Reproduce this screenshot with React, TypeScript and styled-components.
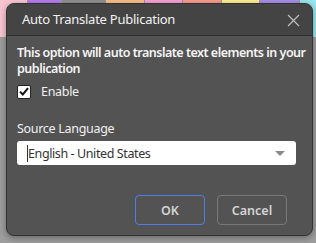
import { createGlobalStyle } from "styled-components";
import styled from "styled-components";

const GlobalStyle = createGlobalStyle`
  html, body {
    margin: 0;
    padding: 0;
    background: #9d9d9d;
    overflow: hidden;
  }
  * {
    box-sizing: border-box;
  }
`;

const tiles = [
  { color: "#f9c4d2", width: 27 },
  { color: "#b57bf0", width: 33 },
  { color: "#8f8f8f", width: 43 },
  { color: "#fbbd86", width: 38 },
  { color: "#f79fd3", width: 37 },
  { color: "#fa9a8e", width: 38 },
  { color: "#fdf08f", width: 37 },
  { color: "#a68ee8", width: 39 },
  { color: "#99e4ee", width: 24 },
];

export default function App() {
  return (
    <Page>
      <GlobalStyle />
      <TileRow>
        {tiles.map((t, i) => (
          <Tile key={i} $color={t.color} $width={t.width} />
        ))}
      </TileRow>
      <Dialog>
        <Header>
          <Title>Auto Translate Publication</Title>
          <CloseButton aria-label="Close">
            <svg width="13" height="13" viewBox="0 0 13 13">
              <path
                d="M1 1 L12 12 M12 1 L1 12"
                stroke="#bdbdbd"
                strokeWidth="1.2"
                fill="none"
              />
            </svg>
          </CloseButton>
        </Header>
        <Body>
          <Description>
            This option will auto translate text elements in your publication
          </Description>
          <CheckRow>
            <CheckBox>
              <svg width="10" height="9" viewBox="0 0 10 9">
                <path
                  d="M1 4.6 L3.8 7.4 L9 1.2"
                  stroke="#111"
                  strokeWidth="2"
                  fill="none"
                />
              </svg>
            </CheckBox>
            <CheckLabel>Enable</CheckLabel>
          </CheckRow>
          <FieldLabel>Source Language</FieldLabel>
          <Select>
            <SelectText>English - United States</SelectText>
            <Caret />
          </Select>
        </Body>
        <Footer>
          <Button $primary>OK</Button>
          <Button>Cancel</Button>
        </Footer>
      </Dialog>
    </Page>
  );
}

const Page = styled.div`
  position: relative;
  width: 316px;
  height: 243px;
  font-family: "Noto Sans", "Open Sans", sans-serif;
`;

const TileRow = styled.div`
  display: flex;
  gap: 1px;
  height: 37px;
  background: #999;
`;

const Tile = styled.div<{ $color: string; $width: number }>`
  width: ${(p) => p.$width}px;
  flex-shrink: 0;
  background: ${(p) => p.$color};
`;

const Dialog = styled.div`
  position: absolute;
  left: 6px;
  top: 3px;
  width: 307px;
  height: 233px;
  display: flex;
  flex-direction: column;
  background: #535353;
  border: 1px solid #333;
  border-radius: 8px;
  overflow: hidden;
  box-shadow: 0 2px 6px rgba(0, 0, 0, 0.35);
`;

const Header = styled.div`
  height: 32px;
  flex-shrink: 0;
  display: flex;
  align-items: center;
  justify-content: space-between;
  padding: 0 12px 0 15px;
  background: #444444;
  border-bottom: 1px solid #2c2c2c;
`;

const Title = styled.div`
  color: #f2f2f2;
  font-size: 13px;
  letter-spacing: -0.25px;
  padding-bottom: 1px;
`;

const CloseButton = styled.div`
  display: flex;
  align-items: center;
  margin-top: 1px;
`;

const Body = styled.div`
  flex: 1;
  display: flex;
  flex-direction: column;
  padding: 9px 3px 0 10px;
`;

const Description = styled.div`
  color: #f4f4f4;
  font-size: 12.5px;
  font-weight: 600;
  line-height: 16px;
  letter-spacing: -0.5px;
`;

const CheckRow = styled.div`
  display: flex;
  align-items: center;
  gap: 10px;
  margin-top: 6px;
`;

const CheckBox = styled.div`
  width: 14px;
  height: 14px;
  display: flex;
  align-items: center;
  justify-content: center;
  background: #fff;
  border: 1px solid #222;
  border-radius: 2px;
`;

const CheckLabel = styled.div`
  color: #f0f0f0;
  font-size: 12.5px;
  letter-spacing: -0.3px;
`;

const FieldLabel = styled.div`
  color: #f0f0f0;
  font-size: 12.5px;
  letter-spacing: -0.3px;
  margin-top: 20px;
`;

const Select = styled.div`
  position: relative;
  margin-top: 4px;
  margin-right: 13px;
  height: 24px;
  display: flex;
  align-items: center;
  padding-left: 10px;
  background: #fff;
  border-radius: 3px;
`;

const SelectText = styled.div`
  color: #333;
  font-size: 12.5px;
  letter-spacing: -0.4px;
  border-left: 1px solid #333;
`;

const Caret = styled.div`
  position: absolute;
  right: 11px;
  top: 10px;
  width: 0;
  height: 0;
  border-left: 5px solid transparent;
  border-right: 5px solid transparent;
  border-top: 5px solid #8a8a8a;
`;

const Footer = styled.div`
  display: flex;
  justify-content: flex-end;
  gap: 12px;
  padding: 0 25px 10px 0;
`;

const Button = styled.div<{ $primary?: boolean }>`
  width: 70px;
  height: 30px;
  display: flex;
  align-items: center;
  justify-content: center;
  color: #d4d4d4;
  font-size: 12.5px;
  font-weight: 600;
  border-radius: 4px;
  border: 1px solid ${(p) => (p.$primary ? "#4f7ee8" : "#777")};
`;
